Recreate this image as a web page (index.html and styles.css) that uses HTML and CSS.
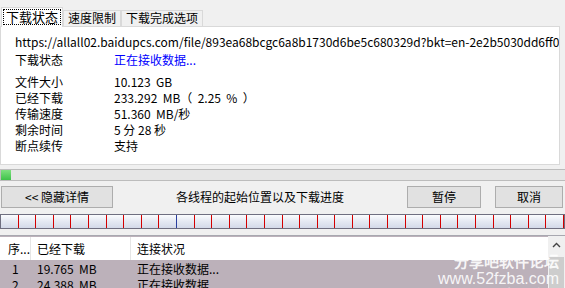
FILE: index.html
```html
<!DOCTYPE html>
<html lang="zh-CN">
<head>
    <meta charset="UTF-8">
    <title>下载状态</title>
    <link rel="stylesheet" href="styles.css">
</head>
<body>
    <div class="window">
        <div class="tabs">
            <div class="tab active"><span class="focus">下载状态</span></div>
            <div class="tab">速度限制</div>
            <div class="tab">下载完成选项</div>
        </div>

        <div class="panel">
            <div class="url">https://allall02.baidupcs.com/file/893ea68bcgc6a8b1730d6be5c680329d?bkt=en-2e2b5030dd6ff03c7a</div>
            <div class="info status">
                <span class="label">下载状态</span>
                <span class="value live">正在接收数据...</span>
            </div>
            <div class="info">
                <span class="label">文件大小</span>
                <span class="value">10.123&nbsp; GB</span>
            </div>
            <div class="info">
                <span class="label">已经下载</span>
                <span class="value">233.292&nbsp; MB（&nbsp; 2.25&nbsp; %&nbsp; ）</span>
            </div>
            <div class="info">
                <span class="label">传输速度</span>
                <span class="value">51.360&nbsp; MB/秒</span>
            </div>
            <div class="info">
                <span class="label">剩余时间</span>
                <span class="value">5 分 28 秒</span>
            </div>
            <div class="info">
                <span class="label">断点续传</span>
                <span class="value">支持</span>
            </div>
        </div>

        <div class="progress"><div class="progress-fill" style="width: 10px"></div></div>

        <div class="actions">
            <button class="btn btn-details">&lt;&lt; 隐藏详情</button>
            <span class="caption">各线程的起始位置以及下载进度</span>
            <button class="btn btn-pause">暂停</button>
            <button class="btn btn-cancel">取消</button>
        </div>

        <div class="threads">
            <span></span><span></span><span></span><span></span>
            <span></span><span></span><span></span><span></span>
            <span></span><span class="current"></span><span></span><span></span>
            <span></span><span></span><span></span><span></span>
            <span></span><span></span><span></span><span></span>
            <span></span><span></span><span></span><span></span>
            <span></span><span></span><span></span><span></span>
            <span></span><span></span><span></span><span></span>
        </div>

        <div class="list">
            <div class="list-body">
                <div class="row head">
                    <span class="col-no">序...</span>
                    <span class="col-done">已经下载</span>
                    <span class="col-state">连接状况</span>
                </div>
                <div class="row">
                    <span class="col-no">1</span>
                    <span class="col-done">19.765&nbsp; MB</span>
                    <span class="col-state">正在接收数据...</span>
                </div>
                <div class="row">
                    <span class="col-no">2</span>
                    <span class="col-done">24.388&nbsp; MB</span>
                    <span class="col-state">正在接收数据...</span>
                </div>
            </div>
            <div class="scrollbar">
                <div class="arrow">
                    <svg width="9" height="6" viewBox="0 0 9 6"><path d="M1 5 L4.5 1.5 L8 5" fill="none" stroke="#444" stroke-width="1.4"/></svg>
                </div>
                <div class="thumb"></div>
            </div>
        </div>

        <div class="watermark">
            <div>分享吧软件论坛</div>
            <div class="site">www.52fzba.com</div>
            <div>吾爱破解论坛</div>
        </div>
    </div>
</body>
</html>
```

FILE: styles.css
```css
:root {
    --window-bg: #f0f0f0;
    --tab-border: #d9d9d9;
    --button-bg: #e1e1e1;
    --button-border: #adadad;
    --row-bg: #bcb1ba;
    --tick: #d40000;
}

* {
    box-sizing: border-box;
    margin: 0;
    padding: 0;
}

body {
    font-family: "Noto Sans CJK SC", "Noto Sans", sans-serif;
    font-size: 12px;
    line-height: 16px;
    color: #000;
    background-color: var(--window-bg);
    overflow: hidden;
}

.window {
    position: relative;
    width: 565px;
    height: 288px;
    overflow: hidden;
}

/* tabs */
.tabs {
    display: flex;
    align-items: flex-end;
    height: 26px;
    padding-left: 1px;
}

.tab {
    height: 16px;
    padding: 0 4px;
    border: 1px solid var(--tab-border);
    border-bottom: none;
    background-color: var(--window-bg);
    line-height: 14px;
    white-space: nowrap;
}

.tab.active {
    position: relative;
    z-index: 1;
    height: 20px;
    margin-bottom: -1px;
    padding: 1px 1px 0;
    background-color: #fff;
    font-size: 13px;
}

.focus {
    display: block;
    padding: 0 2px;
    border: 1px dotted #000;
    line-height: 14px;
}

/* details panel */
.panel {
    width: 560px;
    height: 139px;
    padding: 7px 0 0 14px;
    background-color: #fff;
    border: 1px solid var(--tab-border);
    white-space: nowrap;
    overflow: hidden;
}

.url {
    margin-bottom: 2px;
}

.info {
    display: flex;
}

.info.status {
    margin-bottom: 6px;
}

.label {
    width: 99px;
}

.live {
    color: #0000ff;
}

/* total progress */
.progress {
    height: 12px;
    margin-top: 4px;
    border: 1px solid #bcbcbc;
    border-right: none;
    background-color: #e6e6e6;
}

.progress-fill {
    height: 100%;
    background: linear-gradient(#7ee07f, #3fc24a);
}

/* buttons row */
.actions {
    display: flex;
    align-items: center;
    height: 22px;
    margin-top: 5px;
    padding: 0 2px 0 1px;
}

.btn {
    height: 22px;
    font: inherit;
    background-color: var(--button-bg);
    border: 1px solid var(--button-border);
    color: #000;
}

.btn-details {
    width: 112px;
}

.caption {
    flex: 1;
    text-align: center;
}

.btn-pause {
    width: 74px;
}

.btn-cancel {
    width: 68px;
    margin-left: 14px;
}

/* thread map */
.threads {
    display: flex;
    height: 15px;
    margin-top: 6px;
    border: 1px solid #6f6f80;
    background: linear-gradient(#fbfcfe, #e6eaf3 45%, #d3d9e8);
}

.threads span {
    flex: 1;
    border-right: 1px solid var(--tick);
}

.threads span.current {
    border-right-color: #2a3e9e;
}

/* connection list */
.list {
    display: flex;
    height: 60px;
    margin-top: 6px;
    border-top: 1px solid #a8a8b0;
}

.list-body {
    flex: 1;
    padding-top: 1px;
    background-color: var(--row-bg);
    white-space: nowrap;
}

.row {
    display: flex;
    height: 16px;
    line-height: 18px;
}

.row.head {
    height: 23px;
    align-items: center;
    background-color: #fff;
}

.col-no {
    width: 31px;
    padding-left: 12px;
}

.col-done {
    width: 100px;
    padding-left: 6px;
}

.col-state {
    padding-left: 6px;
}

.head .col-no {
    padding-left: 8px;
}

.head span {
    height: 100%;
    line-height: 23px;
}

.head .col-no,
.head .col-done {
    border-right: 1px solid #e5e5e5;
}

.scrollbar {
    width: 17px;
    background-color: var(--window-bg);
}

.arrow {
    display: flex;
    justify-content: center;
    align-items: center;
    height: 17px;
}

.thumb {
    height: 40px;
    margin: 4px 1px 0;
    background-color: #cdcdcd;
}

/* site watermark laid over the list */
.watermark {
    position: absolute;
    right: 6px;
    top: 253px;
    color: rgba(255, 255, 255, 0.9);
    font-family: "Liberation Sans", sans-serif;
    font-size: 15px;
    font-weight: bold;
    line-height: 17px;
    text-align: right;
}

.watermark .site {
    font-size: 16px;
    font-weight: normal;
}
```
